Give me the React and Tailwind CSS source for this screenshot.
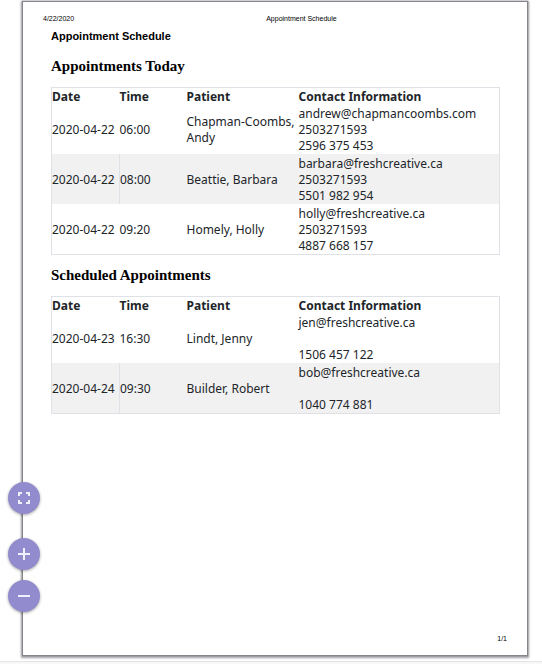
const columns = [
  { key: 'date', label: 'Date', width: 'w-[68px]' },
  { key: 'time', label: 'Time', width: 'w-[67px]' },
  { key: 'patient', label: 'Patient', width: 'w-[25%]' },
  { key: 'contact', label: 'Contact Information', width: 'w-auto' },
];

const todayAppointments = [
  {
    date: '2020-04-22',
    time: '06:00',
    patient: 'Chapman-Coombs, Andy',
    contact: ['andrew@chapmancoombs.com', '2503271593', '2596 375 453'],
  },
  {
    date: '2020-04-22',
    time: '08:00',
    patient: 'Beattie, Barbara',
    contact: ['barbara@freshcreative.ca', '2503271593', '5501 982 954'],
  },
  {
    date: '2020-04-22',
    time: '09:20',
    patient: 'Homely, Holly',
    contact: ['holly@freshcreative.ca', '2503271593', '4887 668 157'],
  },
];

const scheduledAppointments = [
  {
    date: '2020-04-23',
    time: '16:30',
    patient: 'Lindt, Jenny',
    contact: ['jen@freshcreative.ca', '', '1506 457 122'],
  },
  {
    date: '2020-04-24',
    time: '09:30',
    patient: 'Builder, Robert',
    contact: ['bob@freshcreative.ca', '', '1040 774 881'],
  },
];

const AppointmentTable = ({ id, title, appointments }) => (
  <section className="mt-[10px]">
    <h2
      id={id}
      className="font-['Liberation_Serif',serif] text-[15px] leading-5 font-bold text-black"
    >
      {title}
    </h2>
    <table
      aria-labelledby={id}
      className="mt-[11px] w-full table-fixed border-collapse border border-[#dee2e6] text-left font-['Noto_Sans',sans-serif] text-[12px] leading-4 text-[#212529]"
    >
      <thead>
        <tr>
          {columns.map((column) => (
            <th
              key={column.key}
              scope="col"
              className={`${column.width} pt-px leading-[15px] font-bold`}
            >
              {column.label}
            </th>
          ))}
        </tr>
      </thead>
      <tbody>
        {appointments.map((item, row) => {
          const striped = row % 2 === 1;
          return (
            <tr key={`${item.date} ${item.time}`} className={striped ? 'bg-[#f1f1f1]' : ''}>
              <td
                className={`pt-[2px] whitespace-nowrap ${striped ? 'border-r border-[#dee2e6]' : ''}`}
              >
                {item.date}
              </td>
              <td className="pt-[2px]">{item.time}</td>
              <td className="pt-[2px]">{item.patient}</td>
              <td className="pt-[2px]">
                {item.contact.map((line, index) => (
                  <div key={index} className="min-h-4">
                    {line}
                  </div>
                ))}
              </td>
            </tr>
          );
        })}
      </tbody>
    </table>
  </section>
);

const ViewerButton = ({ label, children }) => (
  <button
    type="button"
    aria-label={label}
    className="flex size-8 items-center justify-center rounded-full bg-[#928ccf] shadow-[0_1px_3px_rgba(0,0,0,0.35)]"
  >
    <svg
      viewBox="0 0 16 16"
      className="size-4"
      fill="none"
      stroke="#f1f0fa"
      strokeWidth="2"
      aria-hidden="true"
    >
      {children}
    </svg>
  </button>
);

const App = () => (
  <div className="flex min-h-screen flex-col bg-white">
    <main className="mt-[2px] mr-[15px] ml-[23px] flex flex-1 flex-col bg-white pt-3 pr-[27px] pb-[10px] pl-7 shadow-[0_0_1px_1px_#85868b,0_1px_2px_2px_#a0a0a5]">
      <header className="-mx-2 flex font-['Liberation_Sans',sans-serif] text-[7px] leading-[9px] text-black">
        <span className="w-[48%]">4/22/2020</span>
        <span>Appointment Schedule</span>
      </header>
      <h1 className="mt-[5px] mb-[2px] font-['Liberation_Sans',sans-serif] text-[11px] leading-4 font-bold text-black">
        Appointment Schedule
      </h1>
      <AppointmentTable id="today" title="Appointments Today" appointments={todayAppointments} />
      <AppointmentTable
        id="scheduled"
        title="Scheduled Appointments"
        appointments={scheduledAppointments}
      />
      <footer className="-mr-2 mt-auto pr-px text-right font-['Liberation_Sans',sans-serif] text-[7px] leading-3 text-black">
        1/1
      </footer>
    </main>
    <div className="mt-[6px] h-[3px] border-t border-[#e4e4e4] bg-[#f8f8f8]" />
    <div className="fixed bottom-[52px] left-2 flex flex-col gap-[10px]">
      <div className="mb-[14px]">
        <ViewerButton label="Fit to page">
          <path d="M3 6V3h3M10 3h3v3M13 10v3h-3M6 13H3v-3" />
        </ViewerButton>
      </div>
      <ViewerButton label="Zoom in">
        <path d="M8 2v12M2 8h12" />
      </ViewerButton>
      <ViewerButton label="Zoom out">
        <path d="M2 8h12" />
      </ViewerButton>
    </div>
  </div>
);

export default App;
